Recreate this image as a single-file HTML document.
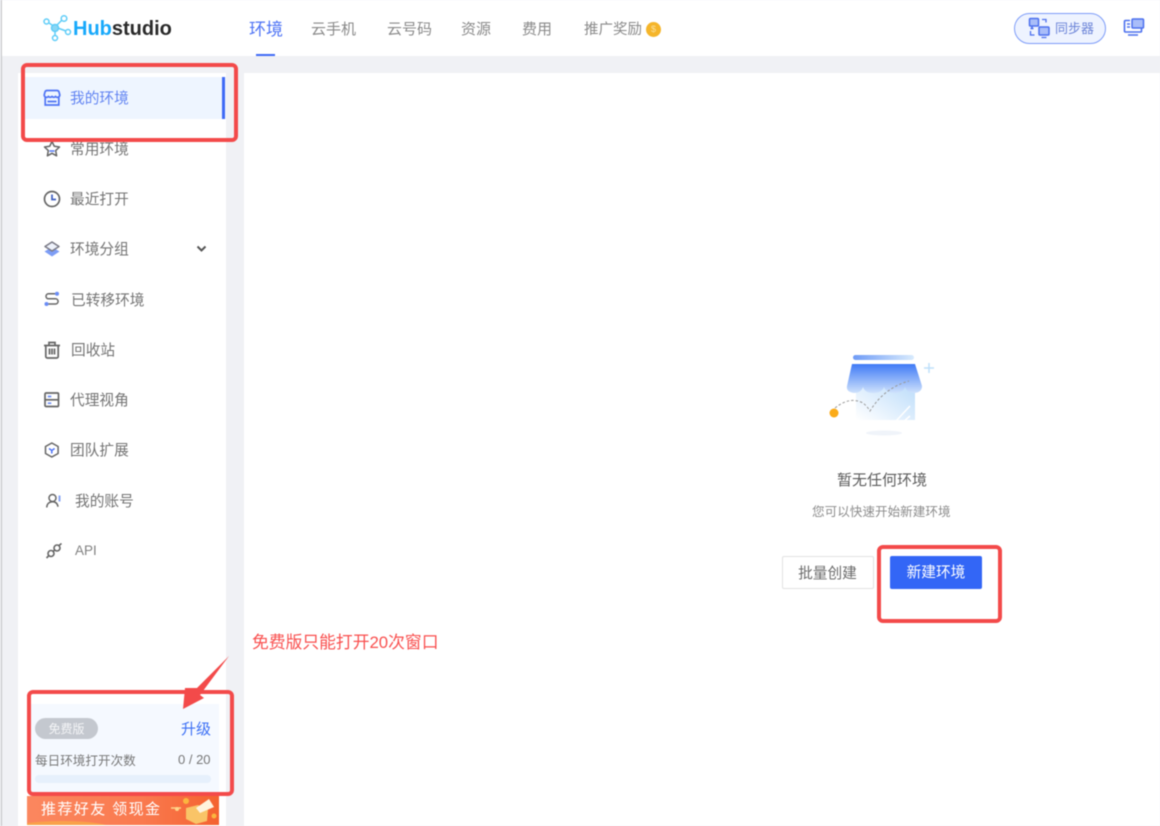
<!DOCTYPE html>
<html lang="zh"><head><meta charset="utf-8"><title>Hubstudio</title>
<style>
html,body{margin:0;padding:0;width:1160px;height:826px;overflow:hidden;background:#f0f1f5}
body{position:relative;font-family:"Liberation Sans","Noto Sans CJK SC",sans-serif;color:#666}
.a{position:absolute}
.t{position:absolute;white-space:nowrap;line-height:20px;font-size:14.700px;color:#747474;transform:translateY(1px)}
.nav{position:absolute;top:20px;white-space:nowrap;line-height:20px;font-size:14.700px;color:#8a8a8a}
.rb{position:absolute;border:4px solid #f34a4a;border-radius:6px;box-sizing:border-box}
svg{position:absolute;overflow:visible}
#wrap{position:absolute;left:0;top:0;width:1160px;height:826px;filter:blur(.5px)}
</style></head><body><div id="wrap">
<div class="a" style="left:1px;top:0;width:1px;height:826px;background:#9a9a9a;opacity:.5"></div>
<div class="a" style="left:2px;top:0;width:1158px;height:56px;background:#fff"></div>
<div class="a" style="left:18px;top:73px;width:208px;height:753px;background:#fff"></div>
<div class="a" style="left:244px;top:73px;width:916px;height:753px;background:#fff"></div>

<!-- logo -->
<svg style="left:42px;top:14px" width="32" height="28" viewBox="0 0 32 28" fill="none" stroke="#5fcdf8" stroke-width="1.500">
<path d="M13 13L7 9M13 13L20 6M13 13L24 17M13 13L13 22"/>
<circle cx="4.500" cy="7.500" r="2.500" fill="#fff"/><circle cx="22" cy="4.500" r="2.800" fill="#fff"/><circle cx="26" cy="18" r="2.500" fill="#fff"/><circle cx="13" cy="24" r="2.500" fill="#fff"/>
<circle cx="13" cy="14" r="3.500" fill="#8ad6f4"/></svg>
<div class="a" style="left:73px;top:15px;line-height:28px;font-size:20px;font-weight:700;white-space:nowrap;color:#2a2a2a"><span style="color:#18a9fb">Hub</span>studio</div>

<!-- nav -->
<div class="nav" style="left:249px;font-size:17px;color:#4f74f5">环境</div>
<div class="a" style="left:256px;top:54px;width:19px;height:2px;background:#3f6af5"></div>
<div class="nav" style="left:311px;font-size:15px">云手机</div>
<div class="nav" style="left:387px;font-size:15px">云号码</div>
<div class="nav" style="left:461px;font-size:15px">资源</div>
<div class="nav" style="left:522px;font-size:15px">费用</div>
<div class="nav" style="left:584px;top:20px;font-size:14.500px">推广奖励</div>
<div class="a" style="left:646px;top:22px;width:15px;height:15px;border-radius:50%;background:#f5b52a;color:#fbe09a;font-size:9px;line-height:15px;text-align:center">$</div>

<!-- sync -->
<div class="a" style="left:1014px;top:13px;width:92px;height:31px;box-sizing:border-box;border:1.500px solid #7d9cf8;border-radius:16px;background:#eef3ff"></div>
<svg style="left:1027px;top:16px" width="24" height="24" viewBox="0 0 24 24" fill="none">
<rect x="2.500" y="2.500" width="9" height="7.500" rx="1" fill="#a9bdf9" stroke="#4c70ee" stroke-width="1.500"/>
<path d="M5 10.500v2M3.500 12.500h3" stroke="#4c70ee" stroke-width="1.500"/>
<rect x="12" y="11" width="10" height="8" rx="1" fill="#a9bdf9" stroke="#4c70ee" stroke-width="1.500"/>
<path d="M14.500 21.500h5M15 3.500h4v3M3.500 15v4h4" stroke="#4c70ee" stroke-width="1.300"/></svg>
<div class="t" style="left:1055px;top:18px;font-size:13px;color:#6c84d8">同步器</div>
<svg style="left:1123px;top:17px" width="22" height="22" viewBox="0 0 22 22" fill="none">
<path d="M7 3.500H2.500a1 1 0 0 0-1 1V14a1 1 0 0 0 1 1h15a1 1 0 0 0 1-1V11" stroke="#4c70ee" stroke-width="1.600"/>
<rect x="9" y="2" width="11.500" height="9" rx="1" fill="#a9bdf9" stroke="#4c70ee" stroke-width="1.500"/>
<path d="M4 7h3M4 10h3M5 18h10" stroke="#4c70ee" stroke-width="1.500"/></svg>

<!-- sidebar -->
<div class="a" style="left:24px;top:77px;width:202px;height:42px;background:#eef5ff"></div>
<div class="a" style="left:222px;top:77px;width:3px;height:42px;background:#3f6af5"></div>

<svg style="left:43px;top:89px" width="18" height="18" viewBox="0 0 18 18" fill="none" stroke="#4f74f5" stroke-width="1.700">
<path d="M4 1.500h10q1.500 0 2 1.500l.8 3a2.400 2.400 0 0 1-4.200 1.500 2.600 2.600 0 0 1-3.600 0 2.600 2.600 0 0 1-3.600 0A2.400 2.400 0 0 1 1.200 6L2 3q.5-1.500 2-1.500z"/>
<path d="M2.200 8.500v7.500h13.600V8.500M4.500 12.500h9"/></svg>
<div class="t" style="left:70px;top:88px;color:#6284f2">我的环境</div>

<svg style="left:43px;top:140px" width="18" height="18" viewBox="0 0 18 18" fill="none" stroke="#666" stroke-width="1.500">
<path d="M9 1.500l2.300 4.800 5.200.7-3.800 3.600.9 5.200L9 13.300l-4.600 2.500.9-5.200L1.500 7l5.200-.7z" stroke-linejoin="round"/>
<path d="M6.500 11h5" stroke="#4f74f5"/></svg>
<div class="t" style="left:70px;top:139px">常用环境</div>

<svg style="left:43px;top:190px" width="18" height="18" viewBox="0 0 18 18" fill="none" stroke="#666" stroke-width="1.700">
<circle cx="9" cy="9" r="7.500"/><path d="M9 4.500V9.500H13" stroke="#3f5fc0"/></svg>
<div class="t" style="left:70px;top:189px">最近打开</div>

<svg style="left:43px;top:240px" width="18" height="18" viewBox="0 0 18 18">
<path d="M9 7l7.500 4.500L9 16.500 1.500 11.500z" fill="#7d9df5"/>
<path d="M9 2l7 4.500L9 11 2 6.500z" fill="#eef2fb" stroke="#7a7a86" stroke-width="1.500" stroke-linejoin="round"/></svg>
<div class="t" style="left:70px;top:239px">环境分组</div>
<svg style="left:196px;top:245px" width="11" height="8" viewBox="0 0 11 8" fill="none"><path d="M1.500 1.500L5.500 5.500L9.500 1.500" stroke="#555" stroke-width="2"/></svg>

<svg style="left:43px;top:291px" width="18" height="18" viewBox="0 0 18 18" fill="none" stroke="#666" stroke-width="1.500">
<path d="M12 2.800H5.500a2.500 2.500 0 0 0 0 5h7a2.600 2.600 0 0 1 0 5.200H5"/>
<circle cx="14" cy="2.800" r="2" fill="#6a8cf5" stroke="none"/><circle cx="3.500" cy="13" r="2" fill="#6a8cf5" stroke="none"/></svg>
<div class="t" style="left:71px;top:290px">已转移环境</div>

<svg style="left:43px;top:341px" width="18" height="18" viewBox="0 0 18 18" fill="none" stroke="#666" stroke-width="1.700">
<path d="M1 4.500h16M6 4V1.500h6V4M2.800 4.500v11a1.500 1.500 0 0 0 1.500 1.500h9.400a1.500 1.500 0 0 0 1.500-1.500v-11M6.500 7.500v6M9 7.500v6M11.500 7.500v6"/></svg>
<div class="t" style="left:71px;top:340px">回收站</div>

<svg style="left:43px;top:391px" width="18" height="18" viewBox="0 0 18 18" fill="none" stroke="#666" stroke-width="1.700">
<rect x="2" y="2" width="13.500" height="13.500" rx="1"/><path d="M2 8.800h13.500"/>
<path d="M4.800 5.500h3.500M4.800 12.200h3.500" stroke="#6a8cf5"/></svg>
<div class="t" style="left:70px;top:390px">代理视角</div>

<svg style="left:43px;top:441px" width="18" height="18" viewBox="0 0 18 18" fill="none" stroke="#666" stroke-width="1.500">
<path d="M8.800 2l6.300 3.500v7L8.800 16l-6.300-3.500v-7z" stroke-linejoin="round"/>
<path d="M6 7.500l2.800 2 2.800-2M8.800 9.500v3" stroke="#4f74f5"/></svg>
<div class="t" style="left:70px;top:440px">团队扩展</div>

<svg style="left:45px;top:492px" width="18" height="18" viewBox="0 0 18 18" fill="none" stroke="#666" stroke-width="1.500">
<circle cx="7.500" cy="6" r="3.500"/><path d="M1.800 15.500c0-3.600 2.400-5.800 5.700-5.800 3 0 5 1.800 5.500 5"/>
<path d="M14.500 3.500v6" stroke="#8aa6f5" stroke-width="2"/></svg>
<div class="t" style="left:75px;top:491px">我的账号</div>

<svg style="left:45px;top:542px" width="18" height="18" viewBox="0 0 18 18" fill="none" stroke="#666" stroke-width="1.600">
<circle cx="6" cy="11.500" r="3"/><circle cx="12" cy="6" r="3"/><path d="M8 9.500l2-1.800M3.500 14L1.500 16M14 3.500L16.500 1.500"/></svg>
<div class="t" style="left:75px;top:540px;font-size:13.500px;color:#808080">API</div>

<!-- plan card -->
<div class="a" style="left:27px;top:704px;width:192px;height:88px;background:#f5f9ff"></div>
<div class="a" style="left:35px;top:718px;width:63px;height:21px;border-radius:11px;background:#c4c8cf;color:#f4f5f7;font-size:12px;line-height:22px;text-align:center">免费版</div>
<div class="t" style="left:181px;top:719px;font-size:15px;color:#3c70f5">升级</div>
<div class="t" style="left:35px;top:750px;font-size:12.600px;color:#777">每日环境打开次数</div>
<div class="t" style="left:178px;top:749px;font-size:13px;color:#777">0 / 20</div>
<div class="a" style="left:35px;top:775px;width:176px;height:8px;border-radius:4px;background:#e6f0fc"></div>

<!-- banner -->
<div class="a" style="left:27px;top:796px;width:192px;height:29px;overflow:hidden;background:linear-gradient(90deg,#fb875f,#fa7a4f 60%,#f4622f)">
<div class="a" style="left:-20px;top:25px;width:110px;height:20px;border-radius:50%;background:#f9a24a"></div>
<div class="a" style="left:14px;top:3px;font-size:15px;line-height:21px;letter-spacing:1.400px;color:#fff;white-space:nowrap">推荐好友 领现金</div>
<svg style="left:143px;top:0" width="48" height="28" viewBox="0 0 48 28">
<path d="M16 12l12-3 10 4-1 12-11 3-10-5z" fill="#f9c467"/><path d="M26 12L39 3l5 8-14 6z" fill="#fff3de"/><circle cx="7" cy="13" r="2" fill="#ffd58a"/><path d="M1 12h10" stroke="#ffd58a" stroke-width="1.500"/><circle cx="16" cy="5" r="3" fill="#fbb53f"/><circle cx="44" cy="20" r="2.500" fill="#fbb53f"/></svg>
</div>

<!-- empty state -->
<svg style="left:826px;top:350px" width="112" height="90" viewBox="0 0 112 90">
<defs>
<linearGradient id="g1" x1="0" x2="1"><stop offset="0" stop-color="#6f9bf6"/><stop offset="1" stop-color="#d9ebfd"/></linearGradient>
<linearGradient id="g2" x1="0" x2="0" y1="0" y2="1"><stop offset="0" stop-color="#3f7af6"/><stop offset="1" stop-color="#cfe2fc"/></linearGradient>
<linearGradient id="g3" x1="1" x2="0" y1="0" y2="1"><stop offset="0" stop-color="#b9dbfa"/><stop offset=".75" stop-color="#eef6fe"/><stop offset="1" stop-color="#fff"/></linearGradient>
</defs>
<rect x="27" y="5" width="61" height="5" rx="2.500" fill="url(#g1)"/>
<rect x="30" y="32" width="59" height="38" fill="url(#g3)"/>
<path d="M26 14H89L96 36q0 6-7 7-8 0-10-6-2 6-10 6-9 0-11-6-2 6-11 6-8 0-10-6-2 6-9 6-8-1-7-7z" fill="url(#g2)"/>
<path d="M9 58q15-12 28-5 4 3 7 8 14-23 39-30" fill="none" stroke="#999" stroke-width="1" stroke-dasharray="2.500 2"/>
<circle cx="8" cy="63" r="4.500" fill="#fbab18"/>
<path d="M70 71l14-15M77 72l7-6" stroke="#fff" stroke-width="1.500"/>
<path d="M103 13v10M98 18h10" stroke="#bfe0fb" stroke-width="1.500"/>
<ellipse cx="58" cy="83" rx="18" ry="2.500" fill="#f0f4fa"/>
</svg>
<div class="t" style="left:837px;top:470px;font-size:15px;color:#5c5c5c">暂无任何环境</div>
<div class="t" style="left:812px;top:501px;font-size:12.600px;color:#8c8c8c">您可以快速开始新建环境</div>
<div class="a" style="left:782px;top:556px;width:92px;height:33px;box-sizing:border-box;border:1px solid #e2e2e2;border-radius:2px;background:#fff;color:#6b6b6b;font-size:14.700px;line-height:33px;text-align:center;padding-right:1px"><span style="position:relative;top:1px">批量创建</span></div>
<div class="a" style="left:890px;top:556px;width:92px;height:33px;border-radius:2px;background:#3366f6;color:#fff;font-size:14.700px;line-height:35px;text-align:center">新建环境</div>

<!-- annotations -->
<div class="rb" style="left:21px;top:63px;width:217px;height:79px"></div>
<div class="rb" style="left:877px;top:545px;width:125px;height:78px"></div>
<div class="rb" style="left:27px;top:690px;width:207px;height:106px"></div>
<svg style="left:180px;top:654px" width="52" height="58" viewBox="0 0 52 58"><path d="M49 2L17 34 5 34 3 55 24 44 20 41z" fill="#f34a4a"/></svg>
<div class="t" style="left:252px;top:632px;font-size:16.800px;color:#f9504f">免费版只能打开20次窗口</div>
</div></body></html>
